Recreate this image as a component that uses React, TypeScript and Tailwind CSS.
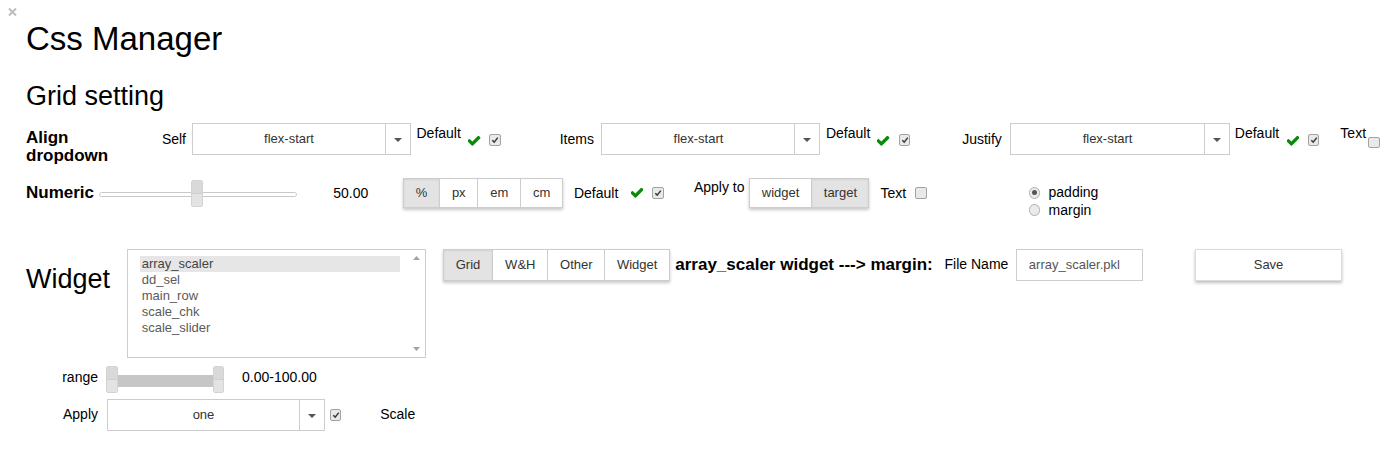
import React from "react";

function Caret() {
  return (
    <svg width="8" height="4" viewBox="0 0 8 4">
      <path d="M0 0h8L4 4z" fill="#555" />
    </svg>
  );
}

function GreenCheck() {
  return (
    <svg width="12.5" height="10" viewBox="190 360 1490 1170" className="block">
      <path
        fill="#0a8a0a"
        d="M1671 566q0 40-28 68l-724 724-136 136q-28 28-68 28t-68-28l-136-136-362-362q-28-28-28-68t28-68l136-136q28-28 68-28t68 28l294 295 656-657q28-28 68-28t68 28l136 136q28 28 28 68z"
      />
    </svg>
  );
}

function Check({ checked = true }: { checked?: boolean }) {
  return (
    <span className="flex w-[11.5px] h-[11.5px] rounded-[2px] border border-[#a3a3a3] bg-[#e9e9e9] items-center justify-center">
      {checked && (
        <svg viewBox="0 0 10 10" className="w-[8px] h-[8px]">
          <path d="M1.6 5.3 L4 7.7 L8.5 2" stroke="#3a3a3a" strokeWidth="1.9" fill="none" />
        </svg>
      )}
    </span>
  );
}

function Dropdown({ value, className }: { value: string; className: string }) {
  return (
    <div className={`flex h-[31.5px] border border-[#cdcdcd] bg-white ${className}`}>
      <div className="flex-1 flex items-center justify-center text-[13px] text-[#333]">{value}</div>
      <div className="w-[25px] border-l border-[#cdcdcd] flex items-center justify-center pt-[2px]">
        <Caret />
      </div>
    </div>
  );
}

function Thumb() {
  return (
    <div className="w-[11.7px] h-[27px] rounded-[2px] border border-[#d3d3d3] overflow-hidden flex flex-col">
      <div className="flex-1 bg-[#d9d9d9]" />
      <div className="flex-1 bg-[#e3e3e3] border-t border-[#cfcfcf]" />
    </div>
  );
}

function Toggles({
  items,
  h,
}: {
  items: { label: string; w: string; sel?: boolean }[];
  h: string;
}) {
  return (
    <div className={`flex shadow-[0_2px_3px_rgba(0,0,0,0.22)] ${h}`}>
      {items.map((it, i) => (
        <div
          key={it.label}
          className={`${it.w} h-full flex items-center justify-center text-[13px] text-[#333] border-y border-l border-[#cdcdcd] ${
            i === items.length - 1 ? "border-r" : ""
          } ${it.sel ? "bg-[#e3e3e3] shadow-[inset_0_1px_2px_rgba(0,0,0,0.08)]" : "bg-white"}`}
        >
          {it.label}
        </div>
      ))}
    </div>
  );
}

function Radio({ checked }: { checked?: boolean }) {
  return (
    <span className="flex w-[11.7px] h-[11.7px] rounded-full border border-[#b0b0b0] bg-[#ebebeb] items-center justify-center">
      {checked && <span className="w-[5px] h-[5px] rounded-full bg-[#555]" />}
    </span>
  );
}

export default function App() {
  return (
    <div className="font-['Liberation_Sans',Arial,sans-serif] w-[1395px] h-[450px] bg-white text-black relative pl-[26px] pt-[20px] text-[14px] overflow-hidden">
      <svg className="absolute left-[8px] top-[8px]" width="9" height="8" viewBox="0 0 9 8">
        <path d="M1 0.5 L8 7.5 M8 0.5 L1 7.5" stroke="#bdbdbd" strokeWidth="2" />
      </svg>

      <h1 className="text-[33px] leading-[38px] font-normal">Css Manager</h1>
      <h2 className="mt-[23px] text-[27px] leading-[30px] font-normal">Grid setting</h2>

      {/* Row 1 */}
      <div className="mt-[12px] flex items-start h-[32px]">
        <div className="w-[120px] mt-[6px] font-bold text-[17px] leading-[18px]">
          Align
          <br />
          dropdown
        </div>
        <div className="w-[40px] h-[32px] flex items-center justify-end">Self</div>
        <Dropdown value="flex-start" className="ml-[6px] w-[219px]" />
        <div className="ml-[5.5px] mt-[1px] leading-[18px]">Default</div>
        <div className="ml-[7.5px] mt-[13px]">
          <GreenCheck />
        </div>
        <div className="ml-[8.6px] mt-[11.3px]">
          <Check />
        </div>

        <div className="w-[93px] h-[32px] flex items-center justify-end">Items</div>
        <Dropdown value="flex-start" className="ml-[7.5px] w-[219px]" />
        <div className="ml-[5.5px] mt-[1px] leading-[18px]">Default</div>
        <div className="ml-[7px] mt-[13px]">
          <GreenCheck />
        </div>
        <div className="ml-[9px] mt-[11.3px]">
          <Check />
        </div>

        <div className="w-[91.5px] h-[32px] flex items-center justify-end">Justify</div>
        <Dropdown value="flex-start" className="ml-[8.5px] w-[219.5px]" />
        <div className="ml-[5px] mt-[1px] leading-[18px]">Default</div>
        <div className="ml-[7.5px] mt-[13px]">
          <GreenCheck />
        </div>
        <div className="ml-[8.7px] mt-[11.3px]">
          <Check />
        </div>

        <div className="ml-[21px] mt-[1px] leading-[18px]">Text</div>
        <div className="ml-[2px] mt-[13.7px]">
          <Check checked={false} />
        </div>
      </div>

      {/* Row 2 */}
      <div className="mt-[22.7px] flex items-start h-[31px]">
        <div className="w-[72.7px] h-[31px] flex items-center font-bold text-[17px]">Numeric</div>
        <div className="w-[198px] h-[31px] relative flex items-center">
          <div className="w-full h-[5px] mt-[2px] rounded-full border border-[#c8c8c8] bg-white" />
          <div className="absolute left-[92.3px] top-[2.3px]">
            <Thumb />
          </div>
        </div>
        <div className="ml-[36.6px] w-[69.4px] h-[31px] flex items-center">50.00</div>
        <Toggles
          h="h-[30.6px]"
          items={[
            { label: "%", w: "w-[36.6px]", sel: true },
            { label: "px", w: "w-[38px]" },
            { label: "em", w: "w-[43px]" },
            { label: "cm", w: "w-[43px]" },
          ]}
        />
        <div className="ml-[10.7px] h-[31px] flex items-center">Default</div>
        <div className="ml-[12.6px] h-[31px] flex items-center">
          <GreenCheck />
        </div>
        <div className="ml-[9px] h-[31px] flex items-center">
          <Check />
        </div>
        <div className="ml-[30px] leading-[18px]">Apply to</div>
        <div className="ml-[4.3px]">
          <Toggles
            h="h-[30.6px]"
            items={[
              { label: "widget", w: "w-[62.6px]" },
              { label: "target", w: "w-[58px]", sel: true },
            ]}
          />
        </div>
        <div className="ml-[11px] h-[31px] flex items-center">Text</div>
        <div className="ml-[9.2px] h-[31px] flex items-center">
          <Check checked={false} />
        </div>
        <div className="ml-[101.8px] mt-[6.5px] flex flex-col">
          <div className="flex items-center h-[17.3px]">
            <Radio checked />
            <span className="ml-[8.3px]">padding</span>
          </div>
          <div className="flex items-center h-[17.3px]">
            <Radio />
            <span className="ml-[8.3px]">margin</span>
          </div>
        </div>
      </div>

      {/* Row 3 */}
      <div className="mt-[40.6px] flex items-start">
        <div className="w-[100.7px] mt-[14.7px] text-[27px] leading-[30px]">Widget</div>
        <div className="w-[299px] h-[109px] border border-[#cdcdcd] flex">
          <div className="pl-[12px] pt-[6px] w-[272px] text-[13px]">
            {["array_scaler", "dd_sel", "main_row", "scale_chk", "scale_slider"].map((t, i) => (
              <div
                key={t}
                className={`h-[16px] leading-[16px] pl-[2px] ${
                  i === 0 ? "bg-[#e6e6e6] text-[#444]" : "text-[#5a5a5a]"
                }`}
              >
                {t}
              </div>
            ))}
          </div>
          <div className="ml-auto w-[16px] flex flex-col justify-between items-center pt-[5.5px] pb-[6px]">
            <svg width="7" height="4" viewBox="0 0 7 4">
              <path d="M0 4h7L3.5 0z" fill="#a3a3a3" />
            </svg>
            <svg width="7" height="4" viewBox="0 0 7 4">
              <path d="M0 0h7L3.5 4z" fill="#a3a3a3" />
            </svg>
          </div>
        </div>
        <div className="ml-[17px]">
          <Toggles
            h="h-[31.4px]"
            items={[
              { label: "Grid", w: "w-[49.6px]", sel: true },
              { label: "W&H", w: "w-[55px]" },
              { label: "Other", w: "w-[57px]" },
              { label: "Widget", w: "w-[65.7px]" },
            ]}
          />
        </div>
        <div className="ml-[5.3px] w-[269.3px] h-[31.4px] flex items-center font-bold text-[17px] whitespace-nowrap">
          array_scaler widget ---&gt; margin:
        </div>
        <div className="w-[71.3px] h-[31.4px] flex items-center">File Name</div>
        <div className="w-[127px] h-[31.4px] border border-[#cdcdcd] pl-[12px] text-[13px] text-[#555] flex items-center">
          array_scaler.pkl
        </div>
        <div className="ml-[52.4px] w-[146.6px] h-[31.7px] border border-[#dcdcdc] bg-white shadow-[0_2px_3px_rgba(0,0,0,0.25)] text-[13px] text-[#333] flex items-center justify-center">
          Save
        </div>
      </div>

      {/* Row 4 */}
      <div className="mt-[7.7px] flex items-start h-[27px]">
        <div className="w-[72px] h-[27px] pb-[3px] flex items-center justify-end">range</div>
        <div className="ml-[8px] w-[118.3px] h-[27px] flex items-center">
          <Thumb />
          <div className="flex-1 h-[11.7px] mt-[3px] bg-[#c6c6c6]" />
          <Thumb />
        </div>
        <div className="ml-[17.7px] h-[27px] pb-[3px] flex items-center">0.00-100.00</div>
      </div>

      {/* Row 5 */}
      <div className="mt-[6.3px] flex items-center h-[31px]">
        <div className="w-[72px] flex justify-end">Apply</div>
        <Dropdown value="one" className="ml-[8.7px] w-[218.6px]" />
        <div className="ml-[4.7px]">
          <Check />
        </div>
        <div className="ml-[38.7px]">Scale</div>
      </div>
    </div>
  );
}
